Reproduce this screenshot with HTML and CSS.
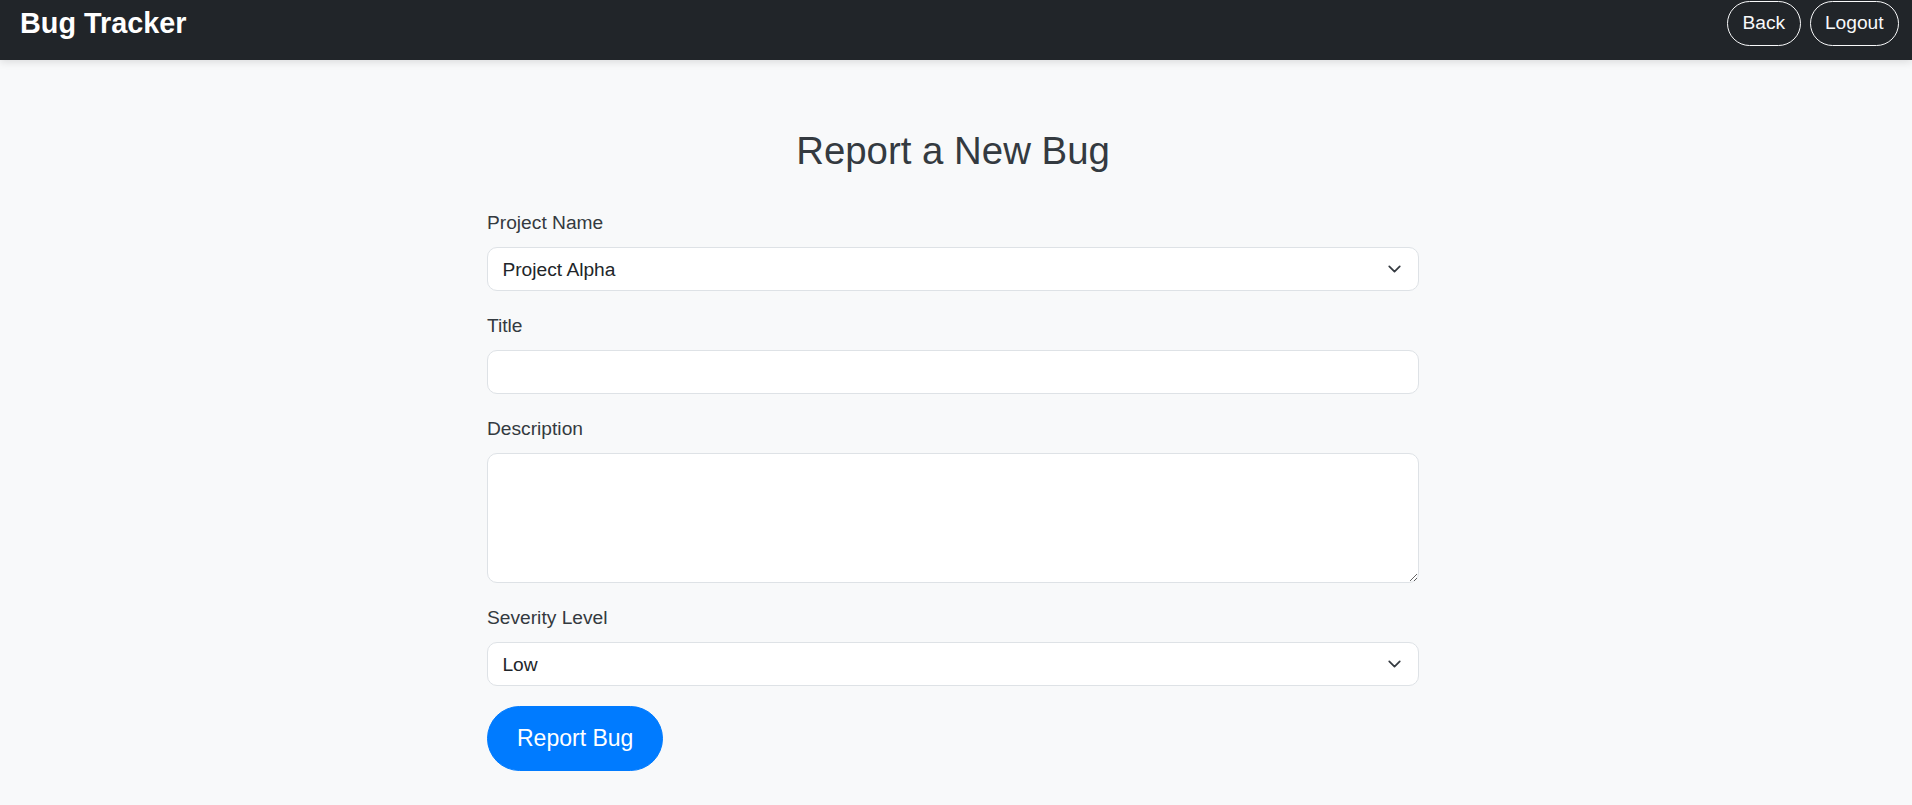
FILE: index.html
```html
<!DOCTYPE html>
<html lang="en">
<head>
<meta charset="utf-8">
<title>Bug Tracker - Report Bug</title>
<link rel="stylesheet" href="styles.css">
</head>
<body>
<nav class="navbar">
  <a class="brand" href="#">Bug Tracker</a>
  <div class="nav-actions">
    <button class="btn-outline" type="button">Back</button>
    <button class="btn-outline" type="button">Logout</button>
  </div>
</nav>
<main class="container">
  <h2 class="page-title">Report a New Bug</h2>
  <form class="bug-form">
    <div class="form-group">
      <label class="form-label" for="project">Project Name</label>
      <div class="select-wrap">
        <select id="project" class="form-control">
          <option>Project Alpha</option>
          <option>Project Beta</option>
        </select>
        <svg class="chevron" viewBox="0 0 16 16" width="19" height="14" aria-hidden="true"><path d="M2 5l6 6 6-6" fill="none" stroke="#343a40" stroke-width="2" stroke-linecap="round" stroke-linejoin="round"/></svg>
      </div>
    </div>
    <div class="form-group">
      <label class="form-label" for="title">Title</label>
      <input id="title" class="form-control" type="text">
    </div>
    <div class="form-group">
      <label class="form-label" for="desc">Description</label>
      <textarea id="desc" class="form-control textarea"></textarea>
    </div>
    <div class="form-group">
      <label class="form-label" for="severity">Severity Level</label>
      <div class="select-wrap">
        <select id="severity" class="form-control">
          <option>Low</option>
          <option>Medium</option>
          <option>High</option>
        </select>
        <svg class="chevron" viewBox="0 0 16 16" width="19" height="14" aria-hidden="true"><path d="M2 5l6 6 6-6" fill="none" stroke="#343a40" stroke-width="2" stroke-linecap="round" stroke-linejoin="round"/></svg>
      </div>
    </div>
    <button class="btn-primary" type="submit">Report Bug</button>
  </form>
</main>
</body>
</html>
```

FILE: styles.css
```css
* { box-sizing: border-box; }

body {
  margin: 0;
  background: #f8f9fa;
  font-family: "Liberation Sans", Arial, sans-serif;
  color: #212529;
}

.navbar {
  height: 60px;
  background: #212529;
  display: flex;
  justify-content: space-between;
  align-items: flex-start;
  padding: 0 13px 0 20px;
  box-shadow: 0 2px 8px rgba(0, 0, 0, 0.12);
  position: relative;
}

.brand {
  color: #ffffff;
  text-decoration: none;
  font-weight: 700;
  font-size: 28.8px;
  line-height: 35px;
  margin-top: 6px;
}

.nav-actions {
  display: flex;
  gap: 9px;
  margin-top: 1px;
}

.btn-outline {
  font-family: inherit;
  font-size: 19.2px;
  line-height: 28.8px;
  padding: 7px 14.4px;
  color: #f8f9fa;
  background: transparent;
  border: 1px solid #f8f9fa;
  border-radius: 999px;
  cursor: pointer;
}

.container {
  width: 938px;
  margin: 0 auto;
  padding: 68px 6px 0 0;
}

.page-title {
  margin: 0 0 34px;
  text-align: center;
  font-weight: 400;
  font-size: 38.4px;
  line-height: 46px;
  color: #343a40;
}

.form-group {
  margin-bottom: 20px;
}

.form-label {
  display: block;
  font-size: 19.2px;
  line-height: 29px;
  margin-bottom: 10px;
  color: #343a40;
}

.form-control {
  display: block;
  width: 100%;
  height: 44px;
  padding: 0 14.4px;
  font-family: inherit;
  font-size: 19.2px;
  color: #212529;
  background: #ffffff;
  border: 1px solid #dee2e6;
  border-radius: 10px;
  outline: none;
}

select.form-control {
  appearance: none;
  -webkit-appearance: none;
  padding-right: 48px;
}

.textarea {
  height: 130px;
  padding: 7px 14.4px;
  resize: vertical;
}

.select-wrap {
  position: relative;
}

.chevron {
  position: absolute;
  right: 15px;
  top: 15px;
  pointer-events: none;
}

.btn-primary {
  font-family: inherit;
  font-size: 23px;
  line-height: 35px;
  padding: 14px 29px;
  color: #ffffff;
  background: #007bff;
  border: 1px solid #007bff;
  border-radius: 999px;
  cursor: pointer;
}
```
